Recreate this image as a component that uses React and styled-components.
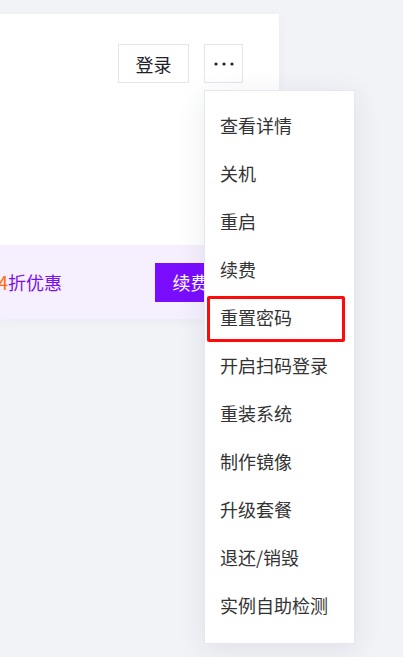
import styled, {createGlobalStyle} from "styled-components";

const GlobalStyle = createGlobalStyle`
  html, body {
    margin: 0;
    padding: 0;
    background: #f2f3f7;
    font-family: "Noto Sans CJK SC", "Noto Sans", sans-serif;
  }
`;

const Page = styled.div`
  width: 403px;
  height: 657px;
  padding-top: 14px;
  box-sizing: border-box;
  overflow: hidden;
`;

const Card = styled.div`
  width: 279px;
  height: 305px;
  background: #fff;
  box-shadow: 0 2px 12px rgba(30, 40, 80, 0.04);
  display: flex;
  flex-direction: column;
  justify-content: space-between;
`;

const Header = styled.div`
  display: flex;
  justify-content: flex-end;
  gap: 15px;
  padding: 30px 36px 0 0;
`;

const Button = styled.button`
  height: 39px;
  padding: 0;
  width: ${p => p.$width}px;
  border: 1px solid #e3e5ec;
  background: #fff;
  color: #1d2129;
  font-family: inherit;
  font-size: 18px;
  display: flex;
  align-items: center;
  justify-content: center;
  cursor: pointer;
`;

const MoreWrap = styled.div`
  position: relative;
`;

const Promo = styled.div`
  height: 74px;
  background: #f6effe;
  display: flex;
  align-items: center;
  overflow: hidden;
`;

const PromoText = styled.span`
  margin-left: -38px;
  font-size: 18px;
  color: #7a10ee;
  white-space: nowrap;
  width: 193px;
`;

const Hot = styled.span`
  color: #ff6a00;
`;

const Renew = styled.button`
  height: 39px;
  width: 71px;
  border: none;
  background: #7a0cff;
  color: #fff;
  font-family: inherit;
  font-size: 18px;
  padding: 0;
`;

const Menu = styled.ul`
  position: absolute;
  top: 46px;
  left: 0;
  width: 149px;
  margin: 0;
  padding: 10px 0 14px;
  list-style: none;
  background: #fff;
  border: 1px solid #e6e7ee;
  box-shadow: 0 6px 28px rgba(30, 40, 80, 0.09);
  z-index: 5;
`;

const MenuItem = styled.li`
  position: relative;
  height: 48px;
  line-height: 48px;
  padding-left: 15px;
  font-size: 18px;
  color: #333;
  white-space: nowrap;

  ${p => p.$marked && `
    &::after {
      content: "";
      position: absolute;
      left: 2px;
      right: 9px;
      top: 3px;
      bottom: -1px;
      border: 3px solid #ff0a0a;
      border-radius: 2px;
    }
  `}
`;

const items = [
    "查看详情",
    "关机",
    "重启",
    "续费",
    "重置密码",
    "开启扫码登录",
    "重装系统",
    "制作镜像",
    "升级套餐",
    "退还/销毁",
    "实例自助检测",
];

const Dots = () => (
    <svg width="22" height="6" viewBox="0 0 22 6">
        <circle cx="3" cy="3" r="1.6" fill="#1d2129"/>
        <circle cx="11" cy="3" r="1.6" fill="#1d2129"/>
        <circle cx="19" cy="3" r="1.6" fill="#1d2129"/>
    </svg>
);

const App = () => {
    return (
        <Page>
            <GlobalStyle/>
            <Card>
                <Header>
                    <Button $width={71}>登录</Button>
                    <MoreWrap>
                        <Button $width={39}><Dots/></Button>
                        <Menu>
                            {items.map(item => (
                                <MenuItem key={item} $marked={item === "重置密码"}>{item}</MenuItem>
                            ))}
                        </Menu>
                    </MoreWrap>
                </Header>
                <Promo>
                    <PromoText>限时<Hot>4</Hot>折优惠</PromoText>
                    <Renew>续费</Renew>
                </Promo>
            </Card>
        </Page>
    );
};

export default App;
